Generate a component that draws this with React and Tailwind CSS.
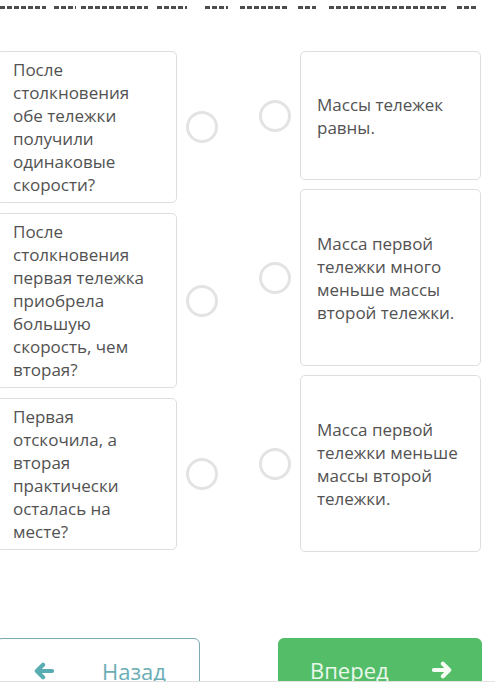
import React from "react";

const questions = [
  "После столкновения обе тележки получили одинаковые скорости?",
  "После столкновения первая тележка приобрела большую скорость, чем вторая?",
  "Первая отскочила, а вторая практически осталась на месте?",
];

const answers = [
  { text: "Массы тележек равны.", h: "h-[129px]" },
  { text: "Масса первой тележки много меньше массы второй тележки.", h: "h-[177px]" },
  { text: "Масса первой тележки меньше массы второй тележки.", h: "h-[177px]" },
];

// cut-off line of text above the task, looks like dashes
const leftWords = [46, 22, 67, 30, 23];
const rightWords = [48, 18, 117, 19];

function Radio() {
  return <div className="w-8 h-8 shrink-0 rounded-full border-[3px] border-[#e3e3e3] bg-white" />;
}

function Arrow({ left, className }) {
  return (
    <svg viewBox="0 0 24 20" className={className} fill="none" stroke="currentColor" strokeWidth="4.6" strokeLinecap="round" strokeLinejoin="round">
      {left ? (
        <path d="M21 10H4M11 3L4 10l7 7" />
      ) : (
        <path d="M3 10h17M13 3l7 7-7 7" />
      )}
    </svg>
  );
}

function Dashes({ words, gaps }) {
  return (
    <div className="flex">
      {words.map((w, i) => (
        <div
          key={i}
          style={{ width: w, marginRight: gaps[i] || 0 }}
          className="h-[3px] bg-[repeating-linear-gradient(90deg,#4d4d4d_0_5px,transparent_5px_7px)]"
        />
      ))}
    </div>
  );
}

export default function App() {
  return (
    <div className="w-[495px] h-[690px] overflow-hidden bg-white font-['Open_Sans',sans-serif] text-[#525252]">
      <div className="pt-[6px] flex">
        <Dashes words={leftWords} gaps={[8, 5, 9, 18, 12]} />
        <Dashes words={rightWords} gaps={[10, 13, 11]} />
      </div>

      <div className="mt-[42px] flex">
        <div className="ml-[-3px] flex flex-col gap-[10px]">
          {questions.map((q, i) => (
            <div key={i} className="flex items-center gap-[9px]">
              <div className="w-[180px] border border-[#dedede] rounded-[5px] px-[15px] py-[6px] text-[17px] leading-[23px]">
                {q}
              </div>
              <Radio />
            </div>
          ))}
        </div>

        <div className="ml-auto mr-[14px] flex flex-col gap-[9px]">
          {answers.map((a, i) => (
            <div key={i} className="flex items-center gap-[9px]">
              <Radio />
              <div
                className={
                  "w-[181px] border border-[#dedede] rounded-[5px] pl-[16px] pr-[12px] flex items-center text-[17px] leading-[23px] " +
                  a.h
                }
              >
                {a.text}
              </div>
            </div>
          ))}
        </div>
      </div>

      <div className="mt-[86px] h-[43px] overflow-hidden flex">
        <button className="ml-[-4px] w-[204px] h-[56px] shrink-0 border border-[#79a9b1] rounded-[6px] flex items-start pt-[18px] text-[#6aaeb6]">
          <Arrow left className="ml-[36px] mt-[5px] w-[22px] h-[18px] text-[#5aacb3]" />
          <span className="ml-[47px] text-[22px] leading-[28px]">Назад</span>
        </button>
        <button className="ml-auto mr-[13px] w-[204px] h-[56px] shrink-0 rounded-[6px] bg-[#53bd68] flex items-start pt-[18px] text-[#e9f8ea]">
          <span className="ml-[32px] text-[22px] leading-[28px]">Вперед</span>
          <Arrow className="ml-[42px] mt-[5px] w-[22px] h-[18px] text-[#f4fcf4]" />
        </button>
      </div>
      <div className="border-t border-[#e2e2e2]" />
    </div>
  );
}
